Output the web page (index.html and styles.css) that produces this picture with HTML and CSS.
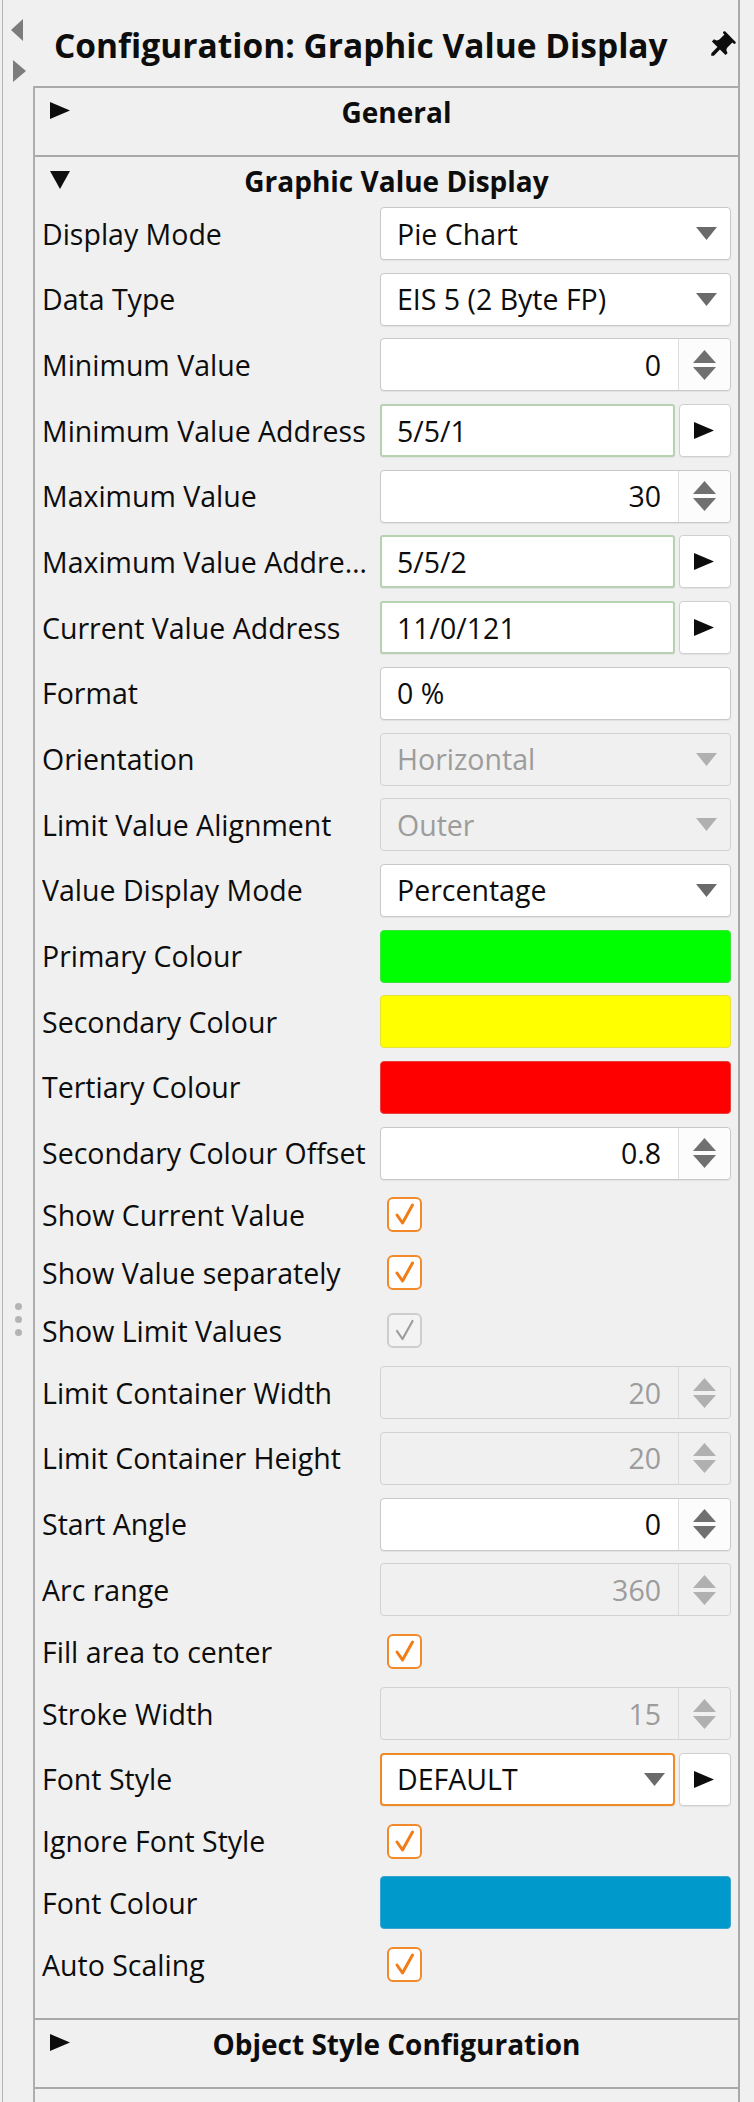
FILE: index.html
```html
<!DOCTYPE html>
<html lang="en">
<head>
<meta charset="utf-8">
<title>Configuration: Graphic Value Display</title>
<link rel="stylesheet" href="styles.css">
</head>
<body>
<div class="app">
  <aside class="strip">
    <svg class="nav nav-left" width="12" height="22" viewBox="0 0 12 22"><polygon points="12,0 12,22 0,11" /></svg>
    <svg class="nav nav-right" width="13" height="22" viewBox="0 0 13 22"><polygon points="0,0 0,22 13,11" /></svg>
    <div class="grip"><span></span><span></span><span></span></div>
  </aside>

  <main class="pane">
    <header class="pane-title">
      <h1>Configuration: Graphic Value Display</h1>
      <svg class="pin" width="30" height="30" viewBox="0 0 24 24"><path transform="rotate(45 12 12)" d="M16.5 9V3.6h1.2c.6 0 1-.45 1-1.1s-.4-1.1-1-1.1H6.3c-.6 0-1 .45-1 1.1s.4 1.1 1 1.1h1.2V9c0 1.8-1.5 3.2-3.2 3.2v2.4h6.3v6.9l1.4 1.6 1.4-1.6v-6.9h6.3v-2.4c-1.7 0-3.2-1.4-3.2-3.2z"/></svg>
    </header>

    <div class="panel">
      <section class="group">
        <div class="group-head closed">
          <svg class="tri" width="20" height="17" viewBox="0 0 20 17"><polygon points="0,0 20,8.5 0,17"/></svg>
          <span class="group-title">General</span>
        </div>
      </section>

      <section class="group">
        <div class="group-head open">
          <svg class="tri" width="20" height="18" viewBox="0 0 20 18"><polygon points="0,0 20,0 10,18"/></svg>
          <span class="group-title">Graphic Value Display</span>
        </div>

        <div class="rows">
          <div class="label">Display Mode</div>
          <div class="field combo"><span class="val">Pie Chart</span><svg class="drop" width="21" height="13" viewBox="0 0 21 13"><polygon points="0,0 21,0 10.5,13"/></svg></div>

          <div class="label">Data Type</div>
          <div class="field combo"><span class="val">EIS 5 (2 Byte FP)</span><svg class="drop" width="21" height="13" viewBox="0 0 21 13"><polygon points="0,0 21,0 10.5,13"/></svg></div>

          <div class="label">Minimum Value</div>
          <div class="field spin"><span class="num">0</span><span class="spin-btn"><svg width="23" height="30" viewBox="0 0 23 30"><polygon points="11.5,0 23,13 0,13"/><polygon points="0,17 23,17 11.5,30"/></svg></span></div>

          <div class="label">Minimum Value Address</div>
          <div class="addr"><div class="field link"><span class="val">5/5/1</span></div><div class="go"><svg width="20" height="17" viewBox="0 0 20 17"><polygon points="0,0 20,8.5 0,17"/></svg></div></div>

          <div class="label">Maximum Value</div>
          <div class="field spin"><span class="num">30</span><span class="spin-btn"><svg width="23" height="30" viewBox="0 0 23 30"><polygon points="11.5,0 23,13 0,13"/><polygon points="0,17 23,17 11.5,30"/></svg></span></div>

          <div class="label">Maximum Value Address</div>
          <div class="addr"><div class="field link"><span class="val">5/5/2</span></div><div class="go"><svg width="20" height="17" viewBox="0 0 20 17"><polygon points="0,0 20,8.5 0,17"/></svg></div></div>

          <div class="label">Current Value Address</div>
          <div class="addr"><div class="field link"><span class="val">11/0/121</span></div><div class="go"><svg width="20" height="17" viewBox="0 0 20 17"><polygon points="0,0 20,8.5 0,17"/></svg></div></div>

          <div class="label">Format</div>
          <div class="field text"><span class="val">0 %</span></div>

          <div class="label">Orientation</div>
          <div class="field combo disabled"><span class="val">Horizontal</span><svg class="drop" width="21" height="13" viewBox="0 0 21 13"><polygon points="0,0 21,0 10.5,13"/></svg></div>

          <div class="label">Limit Value Alignment</div>
          <div class="field combo disabled"><span class="val">Outer</span><svg class="drop" width="21" height="13" viewBox="0 0 21 13"><polygon points="0,0 21,0 10.5,13"/></svg></div>

          <div class="label">Value Display Mode</div>
          <div class="field combo"><span class="val">Percentage</span><svg class="drop" width="21" height="13" viewBox="0 0 21 13"><polygon points="0,0 21,0 10.5,13"/></svg></div>

          <div class="label">Primary Colour</div>
          <div class="swatch sw-green"></div>

          <div class="label">Secondary Colour</div>
          <div class="swatch sw-yellow"></div>

          <div class="label">Tertiary Colour</div>
          <div class="swatch sw-red"></div>

          <div class="label">Secondary Colour Offset</div>
          <div class="field spin"><span class="num">0.8</span><span class="spin-btn"><svg width="23" height="30" viewBox="0 0 23 30"><polygon points="11.5,0 23,13 0,13"/><polygon points="0,17 23,17 11.5,30"/></svg></span></div>

          <div class="label cb-label">Show Current Value</div>
          <div class="cb-cell"><span class="cb"><svg width="35" height="35" viewBox="0 0 35 35"><polyline points="10,18 15.5,26 25.5,8"/></svg></span></div>

          <div class="label cb-label">Show Value separately</div>
          <div class="cb-cell"><span class="cb"><svg width="35" height="35" viewBox="0 0 35 35"><polyline points="10,18 15.5,26 25.5,8"/></svg></span></div>

          <div class="label cb-label">Show Limit Values</div>
          <div class="cb-cell"><span class="cb cb-disabled"><svg width="35" height="35" viewBox="0 0 35 35"><polyline points="10,18 15.5,26 25.5,8"/></svg></span></div>

          <div class="label">Limit Container Width</div>
          <div class="field spin disabled"><span class="num">20</span><span class="spin-btn"><svg width="23" height="30" viewBox="0 0 23 30"><polygon points="11.5,0 23,13 0,13"/><polygon points="0,17 23,17 11.5,30"/></svg></span></div>

          <div class="label">Limit Container Height</div>
          <div class="field spin disabled"><span class="num">20</span><span class="spin-btn"><svg width="23" height="30" viewBox="0 0 23 30"><polygon points="11.5,0 23,13 0,13"/><polygon points="0,17 23,17 11.5,30"/></svg></span></div>

          <div class="label">Start Angle</div>
          <div class="field spin"><span class="num">0</span><span class="spin-btn"><svg width="23" height="30" viewBox="0 0 23 30"><polygon points="11.5,0 23,13 0,13"/><polygon points="0,17 23,17 11.5,30"/></svg></span></div>

          <div class="label">Arc range</div>
          <div class="field spin disabled"><span class="num">360</span><span class="spin-btn"><svg width="23" height="30" viewBox="0 0 23 30"><polygon points="11.5,0 23,13 0,13"/><polygon points="0,17 23,17 11.5,30"/></svg></span></div>

          <div class="label cb-label">Fill area to center</div>
          <div class="cb-cell"><span class="cb"><svg width="35" height="35" viewBox="0 0 35 35"><polyline points="10,18 15.5,26 25.5,8"/></svg></span></div>

          <div class="label">Stroke Width</div>
          <div class="field spin disabled"><span class="num">15</span><span class="spin-btn"><svg width="23" height="30" viewBox="0 0 23 30"><polygon points="11.5,0 23,13 0,13"/><polygon points="0,17 23,17 11.5,30"/></svg></span></div>

          <div class="label">Font Style</div>
          <div class="addr"><div class="field combo focus"><span class="val">DEFAULT</span><svg class="drop" width="21" height="13" viewBox="0 0 21 13"><polygon points="0,0 21,0 10.5,13"/></svg></div><div class="go"><svg width="20" height="17" viewBox="0 0 20 17"><polygon points="0,0 20,8.5 0,17"/></svg></div></div>

          <div class="label cb-label">Ignore Font Style</div>
          <div class="cb-cell"><span class="cb"><svg width="35" height="35" viewBox="0 0 35 35"><polyline points="10,18 15.5,26 25.5,8"/></svg></span></div>

          <div class="label">Font Colour</div>
          <div class="swatch sw-blue"></div>

          <div class="label cb-label">Auto Scaling</div>
          <div class="cb-cell"><span class="cb"><svg width="35" height="35" viewBox="0 0 35 35"><polyline points="10,18 15.5,26 25.5,8"/></svg></span></div>
        </div>
      </section>

      <section class="group">
        <div class="group-head closed">
          <svg class="tri" width="20" height="17" viewBox="0 0 20 17"><polygon points="0,0 20,8.5 0,17"/></svg>
          <span class="group-title">Object Style Configuration</span>
        </div>
      </section>

      <section class="group">
        <div class="group-head closed"></div>
      </section>
    </div>
  </main>
</div>
</body>
</html>
```

FILE: styles.css
```css
html, body {
  margin: 0;
  padding: 0;
}

body {
  background: #f0f0f0;
  font-family: "Open Sans", "Noto Sans", "DejaVu Sans", sans-serif;
  color: #0d0d0d;
  height: 2102px;
  overflow: hidden;
}

.app {
  display: flex;
  height: 2102px;
  overflow: hidden;
}

/* left collapsed strip */
.strip {
  flex: none;
  margin-left: 2px;
  width: 31px;
  border-left: 1px solid #b4b4b4;
  display: flex;
  flex-direction: column;
  align-items: flex-start;
  padding-top: 19px;
  box-sizing: border-box;
}

.nav {
  fill: #7c7c7c;
  display: block;
  flex: none;
}

.nav-left {
  margin-left: 8px;
}

.nav-right {
  margin-left: 10px;
  margin-top: 19px;
}

.grip {
  flex: none;
  margin-top: 1221px;
  margin-left: 12px;
  display: flex;
  flex-direction: column;
  gap: 6px;
}

.grip span {
  width: 7px;
  height: 7px;
  border-radius: 50%;
  background: #b4b4b4;
}

/* main pane */
.pane {
  flex: none;
  width: 707px;
  border-right: 2px solid #a9a9a9;
  box-sizing: border-box;
  display: flex;
  flex-direction: column;
  overflow: hidden;
}

.pane-title {
  flex: none;
  display: flex;
  align-items: flex-start;
  height: 86px;
  box-sizing: border-box;
  padding: 22px 2px 0 21px;
}

.pane-title h1 {
  margin: 0;
  font-size: 33.5px;
  line-height: 46px;
  font-weight: 700;
  white-space: nowrap;
}

.pin {
  flex: none;
  margin-left: auto;
  margin-top: 9px;
  fill: #0d0d0d;
}

.panel {
  flex: none;
  border-left: 2px solid #adadad;
}

.group-head {
  display: flex;
  align-items: flex-start;
  border-top: 2px solid #a9a9a9;
  padding: 5px 0 0 15px;
}

.group-head.closed {
  padding-bottom: 24px;
  height: 38px;
}

.tri {
  fill: #0d0d0d;
  margin-top: 9px;
  flex: none;
}

.group-title {
  flex: 1;
  text-align: center;
  font-size: 28px;
  line-height: 38px;
  font-weight: 700;
  padding-right: 15px;
}

/* property rows */
.rows {
  display: grid;
  grid-template-columns: 327px 351px;
  column-gap: 11px;
  row-gap: 12.7px;
  padding: 7px 7px 31px 7px;
  align-items: center;
}

.label {
  font-size: 28.5px;
  line-height: 40px;
  white-space: nowrap;
  overflow: hidden;
  text-overflow: ellipsis;
}

.field {
  height: 53px;
  box-sizing: border-box;
  border: 1px solid #c8c8c8;
  border-radius: 4px;
  background: #fff;
  display: flex;
  align-items: center;
  font-size: 28.5px;
  line-height: 40px;
  box-shadow: 0 1px 1px rgba(0, 0, 0, 0.06);
}

.val {
  padding-left: 16px;
  white-space: nowrap;
  overflow: hidden;
}

.combo {
  padding-right: 13px;
}

.drop {
  margin-left: auto;
  fill: #6a6a6a;
  flex: none;
}

.spin .num {
  flex: 1;
  text-align: right;
  padding-right: 17px;
}

.spin-btn {
  width: 51px;
  align-self: stretch;
  border-left: 1px solid #dedede;
  display: flex;
  align-items: center;
  justify-content: center;
  background: #fcfcfc;
  border-radius: 0 4px 4px 0;
}

.spin-btn svg {
  fill: #707070;
}

.disabled {
  background: #f0f0f0;
  border-color: #d2d2d2;
  color: #9c9c9c;
  box-shadow: none;
}

.disabled .drop,
.disabled .spin-btn svg {
  fill: #b0b0b0;
}

.disabled .spin-btn {
  background: #f0f0f0;
  border-left-color: #dcdcdc;
}

.addr {
  display: flex;
  gap: 4px;
}

.addr .field {
  width: 295px;
  flex: none;
}

.field.link {
  border: 2px solid #b6d2b0;
  border-radius: 3px;
}

.field.link .val {
  padding-left: 15px;
}

.field.focus {
  border: 2px solid #f08a24;
  padding-right: 8px;
}

.field.focus .val {
  padding-left: 15px;
}

.go {
  flex: 1;
  height: 53px;
  box-sizing: border-box;
  border: 1px solid #cfcfcf;
  border-radius: 4px;
  background: #fff;
  display: flex;
  align-items: center;
  justify-content: center;
  box-shadow: 0 1px 1px rgba(0, 0, 0, 0.06);
}

.go svg {
  fill: #0d0d0d;
  margin-right: 2px;
}

.swatch {
  height: 53px;
  box-sizing: border-box;
  border-radius: 4px;
  border: 1px solid rgba(0, 0, 0, 0.1);
}

.sw-green { background: #00ff00; border-color: #3fe33f; }
.sw-yellow { background: #ffff00; border-color: #e6e23a; }
.sw-red { background: #ff0000; border-color: #e84040; }
.sw-blue { background: #0099cc; border-color: #3aa6cf; }

.cb-cell {
  height: 45.3px;
  display: flex;
  align-items: center;
}

.cb {
  margin-left: 7px;
  width: 35px;
  height: 35px;
  box-sizing: border-box;
  border: 2px solid #f2892a;
  border-radius: 6px;
  background: #fff;
  display: block;
}

.cb svg {
  display: block;
  margin: -2px;
  fill: none;
  stroke: #f07d18;
  stroke-width: 3;
  stroke-linecap: round;
  stroke-linejoin: round;
}

.cb.cb-disabled {
  border-color: #cdcdcd;
  background: #f3f3f3;
}

.cb.cb-disabled svg {
  stroke: #9e9e9e;
  stroke-width: 2.2;
}
```
